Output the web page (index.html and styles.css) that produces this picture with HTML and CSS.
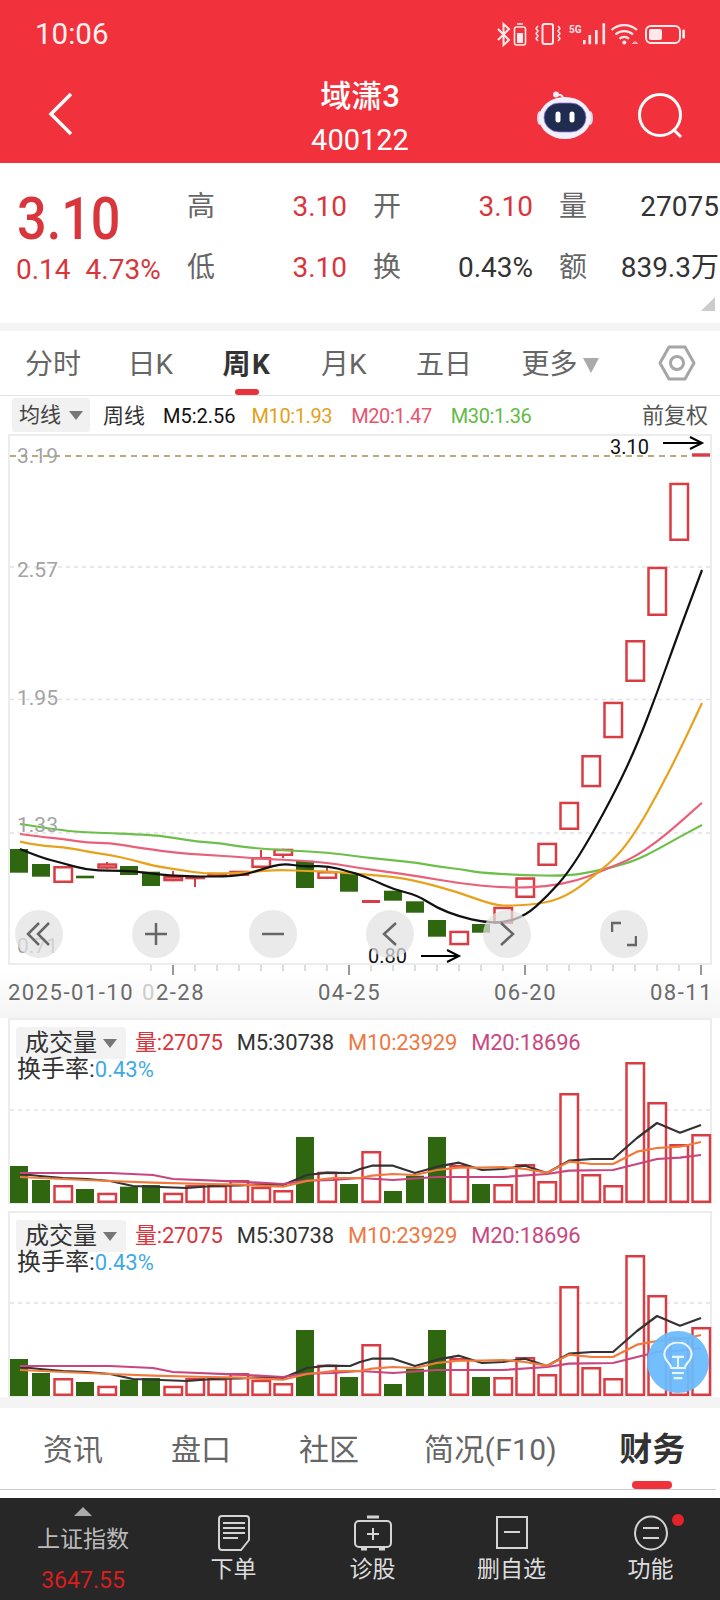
FILE: index.html
```html
<!DOCTYPE html>
<html lang="zh-CN">
<head>
    <meta charset="UTF-8">
    <meta name="viewport" content="width=device-width, initial-scale=1.0">
    <title>域潇3 400122</title>
    <link rel="stylesheet" href="styles.css">
</head>
<body>
    <header class="app-header">
        <div class="status-bar">
            <span class="status-time">10:06</span>
            <svg class="status-icons" width="195" height="30" viewBox="0 0 195 30" fill="none" stroke="#ffe9ea">
                <path d="M3 9 14 20 8.5 25V4L14 9 3 20" stroke-width="2"/>
                <path d="M22 4h6" stroke-width="1.6"/>
                <rect x="19.5" y="7" width="11" height="18" rx="2" stroke-width="1.6"/>
                <rect x="22" y="13" width="6" height="10" fill="#ffe9ea" stroke="none"/>
                <rect x="47.5" y="4" width="10.5" height="20" rx="2" stroke-width="2"/>
                <path d="M43 6l-2 2.5 2 2.5-2 2.5 2 2.5-2 2.5 2 2.5M63 6l2 2.5-2 2.5 2 2.5-2 2.5 2 2.5-2 2.5" stroke-width="1.5"/>
                <text class="status-5g" x="74" y="12.5">5G</text>
                <path d="M89.3 24.3V20M94.8 24.3V15M101.3 24.3V10M108.8 24.3V3.3" stroke-width="2.6"/>
                <path d="M116.5 10a19 19 0 0 1 25.5 0M120.5 14.5a13 13 0 0 1 17.5 0M124.5 18.7a7 7 0 0 1 9.5 0" stroke-width="2.2"/>
                <circle cx="129.3" cy="22.5" r="2" fill="#ffe9ea" stroke="none"/>
                <path d="M137 24l2.5-3v3zM140.5 21l2.5 3h-2.5z" fill="#ffe9ea" stroke="none"/>
                <rect x="151" y="6" width="34" height="17" rx="5" stroke-width="2"/>
                <rect x="154" y="9" width="13" height="11" rx="2" fill="#ffe9ea" stroke="none"/>
                <rect x="187.3" y="9.5" width="2.7" height="9" rx="1.3" fill="#ffe9ea" stroke="none"/>
            </svg>
        </div>
        <nav class="title-bar">
            <svg class="back-icon" width="26" height="44" viewBox="0 0 26 44" fill="none" stroke="#fff" stroke-width="3.5">
                <path d="M23 2 3 22l20 20"/>
            </svg>
            <div class="title-text">
                <div class="stock-name">域潇3</div>
                <div class="stock-code">400122</div>
            </div>
            <div class="title-actions">
                <svg width="60" height="52" viewBox="0 0 60 52">
                    <path d="M22 4c4-1 6 1 7 5" fill="none" stroke="#e6e6f5" stroke-width="2"/>
                    <circle cx="21" cy="3.5" r="3" fill="#f0eef8"/>
                    <ellipse cx="5" cy="27" rx="3" ry="7" fill="#d9d6ee"/>
                    <ellipse cx="55" cy="27" rx="3" ry="7" fill="#d9d6ee"/>
                    <ellipse cx="30" cy="27" rx="26" ry="21" fill="#f2f0fa"/>
                    <rect x="9" y="12" width="42" height="29" rx="15" fill="#1f2b4f" stroke="#8d7be0" stroke-width="0.8"/>
                    <rect x="20.5" y="20.5" width="5" height="11" rx="2.5" fill="#fff"/>
                    <rect x="34.5" y="20.5" width="5" height="11" rx="2.5" fill="#fff"/>
                </svg>
                <svg width="50" height="50" viewBox="0 0 50 50" fill="none" stroke="#fff" stroke-width="3">
                    <circle cx="24" cy="24" r="20.5"/>
                    <path d="M37 38l8 8"/>
                </svg>
            </div>
        </nav>
    </header>

    <section class="quote">
        <div class="quote-price">
            <div class="price-now">3.10</div>
            <div class="price-change"><span>0.14</span><span>4.73%</span></div>
        </div>
        <div class="quote-grid">
            <div class="quote-cell"><span class="cell-label">高</span><span class="up">3.10</span></div>
            <div class="quote-cell"><span class="cell-label">开</span><span class="up">3.10</span></div>
            <div class="quote-cell"><span class="cell-label">量</span><span>27075</span></div>
            <div class="quote-cell"><span class="cell-label">低</span><span class="up">3.10</span></div>
            <div class="quote-cell"><span class="cell-label">换</span><span>0.43%</span></div>
            <div class="quote-cell"><span class="cell-label">额</span><span>839.3万</span></div>
        </div>
        <span class="quote-corner"></span>
    </section>

    <div class="band"></div>

    <div class="period-tabs">
        <span class="period period-first">分时</span>
        <span class="period">日K</span>
        <span class="period active">周K</span>
        <span class="period">月K</span>
        <span class="period">五日</span>
        <span class="period period-more">更多<i class="caret caret-large"></i></span>
        <svg class="period-settings" width="38" height="38" viewBox="0 0 38 38" fill="none" stroke="#a6a6a6" stroke-width="3">
            <path d="M11 3h16l9 16-9 16H11L2 19z" stroke-linejoin="round"/>
            <circle cx="19" cy="19" r="6.5"/>
        </svg>
    </div>

    <div class="ma-legend">
        <span class="select-chip">均线<i class="caret"></i></span>
        <span class="ma-item ma-period">周线</span>
        <span class="ma-item ma-5">M5:2.56</span>
        <span class="ma-item ma-10">M10:1.93</span>
        <span class="ma-item ma-20">M20:1.47</span>
        <span class="ma-item ma-30">M30:1.36</span>
        <span class="ma-adjust">前复权</span>
    </div>

    <section class="kline">
        <svg id="kline-chart" class="chart" width="720" height="584" viewBox="0 434 720 584">
            <path class="frame" d="M9 964V435H711V964Z"/>
            <path class="grid-line" d="M10 567H710M10 699.5H710M10 833H710"/>
            <path class="last-line" d="M10 456H692"/>
            <g id="kline-ticks"></g>
            <g id="kline-candles"></g>
            <g id="kline-lines"></g>
            <text class="axis-price" x="17" y="463">3.19</text>
            <text class="axis-price" x="17" y="577">2.57</text>
            <text class="axis-price" x="17" y="705">1.95</text>
            <text class="axis-price" x="17" y="832">1.33</text>
            <text class="axis-price" x="17" y="953">0.71</text>
            <text class="mark-price" x="610" y="454">3.10</text>
            <path class="mark-arrow" d="M663 443H701M690 437l12 6-12 6"/>
            <text class="mark-price" x="368" y="963">0.80</text>
            <path class="mark-arrow" d="M421 956H458M447 950l12 6-12 6"/>
            <text class="axis-date" x="8" y="1000">2025-01-10</text>
            <text class="axis-date" x="142" y="1000"><tspan class="axis-faded">0</tspan>2-28</text>
            <text class="axis-date" x="318" y="1000">04-25</text>
            <text class="axis-date" x="494" y="1000">06-20</text>
            <text class="axis-date" x="650" y="1000">08-11</text>
        </svg>
        <div class="chart-tools">
            <span class="tool"><svg width="26" height="26" viewBox="0 0 26 26"><path d="M13 2 2 13l11 11M23 2 12 13l11 11"/></svg></span>
            <span class="tool"><svg width="26" height="26" viewBox="0 0 26 26"><path d="M13 2v22M2 13h22"/></svg></span>
            <span class="tool"><svg width="26" height="26" viewBox="0 0 26 26"><path d="M2 13h22"/></svg></span>
            <span class="tool"><svg width="26" height="26" viewBox="0 0 26 26"><path d="M19 2 7 13l12 11"/></svg></span>
            <span class="tool"><svg width="26" height="26" viewBox="0 0 26 26"><path d="M7 2l12 11L7 24"/></svg></span>
            <span class="tool"><svg width="26" height="26" viewBox="0 0 26 26"><path d="M1 11V2h9M25 15v9h-9"/></svg></span>
        </div>
    </section>

    <section class="volume volume-first">
        <svg class="chart volume-chart" width="720" height="186" viewBox="0 1018 720 186"></svg>
        <div class="volume-legend">
            <div class="volume-row">
                <span class="select-chip select-chip-volume">成交量<i class="caret"></i></span>
                <span class="up">量:27075</span>
                <span class="vol-5">M5:30738</span>
                <span class="vol-10">M10:23929</span>
                <span class="vol-20">M20:18696</span>
            </div>
            <div class="turnover">换手率:<span>0.43%</span></div>
        </div>
    </section>

    <section class="volume">
        <svg class="chart volume-chart" width="720" height="186" viewBox="0 1018 720 186"></svg>
        <div class="volume-legend">
            <div class="volume-row">
                <span class="select-chip select-chip-volume">成交量<i class="caret"></i></span>
                <span class="up">量:27075</span>
                <span class="vol-5">M5:30738</span>
                <span class="vol-10">M10:23929</span>
                <span class="vol-20">M20:18696</span>
            </div>
            <div class="turnover">换手率:<span>0.43%</span></div>
        </div>
        <div class="hint-bubble">
            <svg width="34" height="40" viewBox="0 0 40 46" fill="none" stroke="#e8f5ff" stroke-width="2.5">
                <path d="M12 30c0-5-8-8-8-16a16 14 0 0 1 32 0c0 8-8 11-8 16z"/>
                <path d="M13 17h14M20 17v13M13 36h14M15 42h10"/>
            </svg>
        </div>
    </section>

    <div class="band band-low"></div>

    <div class="info-tabs">
        <span class="info-tab">资讯</span>
        <span class="info-tab">盘口</span>
        <span class="info-tab">社区</span>
        <span class="info-tab info-tab-wide">简况(F10)</span>
        <span class="info-tab active">财务</span>
    </div>

    <footer class="bottom-nav">
        <div class="nav-item nav-index">
            <i class="index-arrow"></i>
            <span class="index-name">上证指数</span>
            <span class="index-value">3647.55</span>
        </div>
        <div class="nav-item">
            <svg width="34" height="36" viewBox="0 0 34 36" fill="none" stroke="#d4d4d4" stroke-width="2">
                <path d="M5 1h24a3 3 0 0 1 3 3v21l-8 10H5a3 3 0 0 1-3-3V4a3 3 0 0 1 3-3z"/>
                <path d="M6 8h22M6 13h22M6 18h22M6 23h15"/>
            </svg>
            <span class="nav-label">下单</span>
        </div>
        <div class="nav-item">
            <svg width="40" height="36" viewBox="0 0 40 36" fill="none" stroke="#d4d4d4" stroke-width="2">
                <rect x="2" y="6" width="36" height="26" rx="4"/>
                <path d="M14 2h12" stroke-width="3"/>
                <path d="M8 34h6M26 34h6" stroke-width="3"/>
                <path d="M20 13v12M14 19h12"/>
            </svg>
            <span class="nav-label">诊股</span>
        </div>
        <div class="nav-item">
            <svg width="34" height="36" viewBox="0 0 34 36" fill="none" stroke="#d4d4d4" stroke-width="2">
                <rect x="2" y="2" width="30" height="31"/>
                <path d="M9 17h16"/>
            </svg>
            <span class="nav-label">删自选</span>
        </div>
        <div class="nav-item">
            <svg width="36" height="36" viewBox="0 0 36 36" fill="none" stroke="#d4d4d4" stroke-width="2">
                <ellipse cx="18" cy="18" rx="16" ry="16.5"/>
                <path d="M10 13h16M10 23h16"/>
            </svg>
            <span class="nav-label">功能</span>
            <i class="nav-dot"></i>
        </div>
    </footer>

    <script src="chart.js"></script>
</body>
</html>
```

FILE: styles.css
```css
/* General Reset */
* {
    margin: 0;
    padding: 0;
    box-sizing: border-box;
}

body {
    width: 720px;
    height: 1600px;
    overflow: hidden;
    background-color: #fff;
    font-family: Roboto, "Noto Sans CJK SC", sans-serif;
    color: #333;
}

i {
    font-style: normal;
}

.up {
    color: #d8363c;
}

/* Red header */
.app-header {
    height: 163px;
    background-color: #f1323c;
    color: #fff;
}

.status-bar {
    height: 68px;
    padding: 19px 30px 0 35px;
    display: flex;
    justify-content: space-between;
    align-items: flex-start;
}

.status-time {
    font-size: 29.5px;
    line-height: 30px;
    color: #fff1f1;
}

.status-icons {
    margin-top: 1px;
}

.status-5g {
    font-size: 10px;
    font-weight: 700;
    fill: #ffe9ea;
    stroke: none;
}

.title-bar {
    height: 95px;
    display: grid;
    grid-template-columns: 1fr auto 1fr;
    align-items: start;
}

.back-icon {
    margin: 24px 0 0 48px;
}

.title-text {
    text-align: center;
}

.stock-name {
    font-size: 31px;
    line-height: 40px;
    margin-top: 9px;
    font-weight: 500;
}

.stock-code {
    font-size: 29px;
    line-height: 40px;
    margin-top: 3px;
}

.title-actions {
    display: flex;
    justify-content: flex-end;
    align-items: flex-start;
    gap: 41px;
    padding: 23px 34px 0 0;
}

/* Quote block */
.quote {
    position: relative;
    height: 160px;
    display: flex;
    padding-left: 16px;
}

.quote-price {
    width: 171px;
    padding-top: 26px;
    color: #d8363c;
}

.price-now {
    font-size: 60px;
    line-height: 60px;
    font-weight: 500;
    margin-left: 1px;
    transform: scaleX(0.87);
    transform-origin: left;
}

.price-change {
    display: flex;
    gap: 15px;
    font-size: 28px;
    line-height: 40px;
    margin-top: 1px;
    white-space: nowrap;
}

.quote-grid {
    width: 531px;
    padding-top: 24px;
    display: grid;
    grid-template-columns: repeat(3, 160px);
    grid-auto-rows: 40px;
    column-gap: 26px;
    row-gap: 21px;
    font-size: 28px;
    line-height: 40px;
}

.quote-cell {
    display: flex;
    justify-content: space-between;
    white-space: nowrap;
}

.cell-label {
    color: #666;
}

.quote-corner {
    position: absolute;
    right: 5px;
    top: 134px;
    border-style: solid;
    border-width: 0 0 14px 14px;
    border-color: transparent transparent #ccc transparent;
}

.band {
    height: 8px;
    background-color: #f4f4f4;
}

.band-low {
    height: 11px;
}

/* Period tabs */
.period-tabs {
    height: 65px;
    padding: 0 24px 0 25px;
    display: flex;
    align-items: center;
    gap: 49.5px;
    border-bottom: 1px solid #e4e4e4;
}

.period {
    position: relative;
    font-size: 28px;
    line-height: 60px;
    padding-top: 4px;
    color: #666;
}

.period-first {
    margin-right: -3px;
}

.period.active {
    font-weight: 700;
    letter-spacing: 1.5px;
    color: #333;
}

.period.active::after {
    content: "";
    position: absolute;
    left: 12px;
    right: 12px;
    bottom: 0;
    height: 6px;
    border-radius: 3px;
    background-color: #e8333b;
}

.period-more {
    display: flex;
    align-items: center;
    gap: 5px;
}

.period-settings {
    margin-left: auto;
}

.caret {
    display: inline-block;
    border-style: solid;
    border-width: 9px 7px 0 7px;
    border-color: #777 transparent transparent transparent;
}

.caret-large {
    border-width: 15px 8px 0 8px;
    border-color: #aaa transparent transparent transparent;
}

/* Moving average legend */
.ma-legend {
    height: 38px;
    padding: 2px 12px 0 12px;
    display: flex;
    align-items: flex-start;
    font-size: 20px;
    line-height: 36px;
    white-space: nowrap;
}

.select-chip {
    display: flex;
    align-items: center;
    gap: 8px;
    width: 78px;
    height: 34px;
    padding-left: 7px;
    border-radius: 3px;
    background-color: #f1f1f1;
    font-size: 21px;
    color: #444;
}

.ma-item {
    margin-left: 17px;
}

.ma-period {
    margin-left: 13px;
    font-size: 21px;
}

.ma-5 {
    margin-left: 18px;
    color: #111;
}

.ma-10 {
    margin-left: 16px;
    color: #e2a11e;
    letter-spacing: -0.4px;
}

.ma-20 {
    color: #e6566f;
    letter-spacing: -0.4px;
    margin-left: 19px;
}

.ma-30 {
    color: #62ba45;
    letter-spacing: -0.4px;
    margin-left: 19px;
}

.ma-adjust {
    margin-left: auto;
    font-size: 22px;
    color: #555;
}

/* K-line chart */
.kline {
    position: relative;
    height: 584px;
    background: linear-gradient(#fff 92%, #f4f4f4);
}

.chart {
    display: block;
}

.frame {
    fill: #fff;
    stroke: #ececec;
    stroke-width: 2;
}

.grid-line {
    fill: none;
    stroke: #e2e2e2;
    stroke-width: 1.5;
    stroke-dasharray: 4 4;
}

.last-line {
    fill: none;
    stroke: #bca97e;
    stroke-width: 2;
    stroke-dasharray: 6 5;
}

.axis-price {
    font-size: 21px;
    fill: #a3a3a3;
}

.mark-price {
    font-size: 20px;
    fill: #111;
}

.mark-arrow {
    fill: none;
    stroke: #000;
    stroke-width: 2;
}

.axis-date {
    font-size: 22px;
    letter-spacing: 1.5px;
    fill: #6a6a6a;
}

.axis-faded {
    fill: #ccc;
}

.chart-tools {
    position: absolute;
    left: 15px;
    top: 476px;
    display: flex;
    gap: 69px;
}

.tool {
    width: 48px;
    height: 48px;
    display: flex;
    align-items: center;
    justify-content: center;
    border-radius: 50%;
    background-color: rgba(226, 226, 226, 0.72);
}

.tool svg {
    fill: none;
    stroke: #666;
    stroke-width: 2.5;
}

/* Volume panels */
.volume {
    position: relative;
    background-color: #fff;
}

.volume-first {
    padding-bottom: 7px;
}

.volume-legend {
    position: absolute;
    left: 16px;
    top: 8px;
}

.volume-row {
    display: flex;
    align-items: center;
    gap: 14px;
    font-size: 22px;
    line-height: 34px;
    letter-spacing: -0.2px;
    white-space: nowrap;
}

.select-chip-volume {
    width: 110px;
    height: 32px;
    padding-left: 9px;
    gap: 6px;
    margin-right: -5px;
    font-size: 24px;
    letter-spacing: 0;
    background-color: #f2f2f2;
    color: #333;
}

.vol-5 {
    color: #333;
}

.vol-10 {
    color: #ec7a45;
}

.vol-20 {
    color: #c9487f;
}

.turnover {
    font-size: 24px;
    line-height: 30px;
    margin-top: -6px;
    margin-left: 1px;
    color: #333;
}

.turnover span {
    font-size: 22px;
    color: #3fa9e6;
}

.hint-bubble {
    position: absolute;
    left: 647px;
    top: 120px;
    width: 62px;
    height: 62px;
    display: flex;
    align-items: center;
    justify-content: center;
    border-radius: 50%;
    background-color: rgba(106, 186, 252, 0.94);
}

/* Info tabs */
.info-tabs {
    height: 82px;
    padding-left: 43px;
    display: flex;
    border-bottom: 1px solid #ccc;
    margin-right: 4px;
}

.info-tab {
    position: relative;
    font-size: 30px;
    line-height: 78px;
    padding-top: 3px;
    color: #666;
}

.info-tab + .info-tab {
    margin-left: 68px;
}

.info-tab + .info-tab-wide {
    margin-left: 65px;
    letter-spacing: 0.3px;
}

.info-tab + .info-tab.active {
    margin-left: 62px;
    font-size: 33px;
    font-weight: 700;
    color: #333;
}

.info-tab.active::after {
    content: "";
    position: absolute;
    left: 13px;
    right: 13px;
    bottom: 0;
    height: 8px;
    border-radius: 4px;
    background-color: #f0333b;
}

/* Bottom navigation */
.bottom-nav {
    height: 102px;
    margin-top: 8px;
    padding-left: 2px;
    display: grid;
    grid-template-columns: 162px repeat(4, 139px);
    background-color: #272727;
}

.nav-item {
    position: relative;
    padding-top: 17px;
    display: flex;
    flex-direction: column;
    align-items: center;
    gap: 4px;
}

.nav-label {
    font-size: 23px;
    line-height: 30px;
    color: #ddd;
}

.nav-index {
    padding-top: 9px;
    gap: 0;
}

.index-arrow {
    border-style: solid;
    border-width: 0 9px 9px 9px;
    border-color: transparent transparent #aaa transparent;
}

.index-name {
    margin-top: 9px;
    font-size: 23px;
    line-height: 30px;
    color: #bbb;
}

.index-value {
    margin-top: 11px;
    font-size: 23px;
    line-height: 30px;
    color: #d81e1e;
}

.nav-dot {
    position: absolute;
    left: 91px;
    top: 16px;
    width: 12px;
    height: 12px;
    border-radius: 50%;
    background-color: #e5232b;
}
```

FILE: chart.js
```js
const SVG_NS = 'http://www.w3.org/2000/svg';
const RED = '#d93c42';
const GREEN = '#2f6610';
const SLOT = 22;

const el = (parent, name, attrs) => {
    const node = document.createElementNS(SVG_NS, name);
    Object.entries(attrs).forEach(([k, v]) => node.setAttribute(k, v));
    parent.appendChild(node);
    return node;
};

const slotLeft = (i) => 10 + SLOT * i;

const drawBar = (parent, kind, i, top, bottom) => {
    if (kind === 'r') {
        el(parent, 'rect', { x: slotLeft(i) + 0.5, y: top + 1.25, width: 17.5, height: bottom - top - 2.5, fill: '#fff', stroke: RED, 'stroke-width': 2.5 });
    } else {
        el(parent, 'rect', { x: slotLeft(i), y: top, width: 18, height: bottom - top, fill: kind === 'g' ? GREEN : RED });
    }
};

const drawLine = (parent, color, points, width) => {
    el(parent, 'polyline', {
        points: points.map((p) => p.join(',')).join(' '),
        fill: 'none',
        stroke: color,
        'stroke-width': width,
        'stroke-linejoin': 'round'
    });
};

// Rounds the corners of a line by curving through the midpoints of its segments
const drawCurve = (parent, color, points, width) => {
    let d = `M${points[0].join(' ')}`;
    for (let i = 1; i < points.length - 1; i++) {
        const [x, y] = points[i];
        const [nx, ny] = points[i + 1];
        d += `Q${x} ${y} ${(x + nx) / 2} ${(y + ny) / 2}`;
    }
    d += `L${points[points.length - 1].join(' ')}`;
    el(parent, 'path', { d, fill: 'none', stroke: color, 'stroke-width': width });
};

// Weekly candles: kind, body top, body bottom, wick top, wick bottom
const candles = [
    ['g', 849, 872.7], ['g', 864, 876.7], ['r', 866, 883], ['g', 875.7, 878.3],
    ['r', 863.3, 868.7, 862], ['g', 866, 875], ['g', 871.7, 886], ['r', 876, 881.3, 871],
    ['r', 876, 879.3, 876, 887], ['r', 872.7, 877], ['r', 870.7, 876], ['r', 857, 868, 850],
    ['r', 848.7, 856, 848.7, 858], ['g', 860.7, 888], ['r', 871, 879, 868], ['g', 873, 891.7],
    ['f', 900, 903], ['g', 890.7, 900.7], ['g', 901.3, 912.7], ['g', 920, 936.7],
    ['r', 930.7, 945.3], ['g', 924, 932.7], ['r', 906.7, 924], ['r', 877.3, 898],
    ['r', 842.7, 866], ['r', 801.7, 830], ['r', 755, 787.3], ['r', 701.7, 738.3],
    ['r', 640, 682], ['r', 566.7, 616], ['r', 482.7, 541], ['f', 453.3, 456.7]
];

const priceLines = {
    '#111': [[20, 849], [40, 857.3], [63, 863.3], [87, 870], [110, 870.7], [133, 871], [160, 874.7], [180, 876], [207, 876.7], [240, 876], [263, 869], [283, 863.3], [303, 866.7], [327, 865.7], [350, 871.7], [360, 875], [373, 880], [395, 890], [417, 895], [437, 908], [460, 916.7], [483, 922], [503, 922.7], [525, 916], [547, 896.7], [568, 873], [590, 838], [617, 788], [637, 745], [657, 693], [677, 637], [702, 570]],
    '#e6a21c': [[20, 841.7], [40, 846], [63, 846.7], [87, 851.7], [110, 855], [133, 860], [153, 865.7], [180, 870], [207, 874], [240, 873], [263, 870.7], [283, 870], [307, 871], [333, 871.7], [359, 874], [393, 876.7], [417, 881], [457, 891.7], [493, 905], [513, 906], [547, 903], [570, 894], [593, 876.7], [617, 856.7], [637, 830], [658, 793], [680, 750], [702, 703]],
    '#e8607a': [[20, 834], [40, 836.7], [63, 839], [87, 842.7], [110, 843], [133, 846.7], [173, 852.7], [207, 855], [240, 857], [263, 859], [290, 860], [330, 863], [359, 868], [387, 871.7], [417, 876], [457, 883], [503, 888], [547, 886.7], [577, 880.7], [603, 870.7], [633, 858], [657, 841.7], [677, 825], [702, 802.7]],
    '#6cc04a': [[20, 824], [63, 830.7], [87, 832.3], [153, 835], [173, 837.7], [197, 841.7], [220, 843], [243, 847.3], [290, 850.7], [327, 852.3], [359, 856.7], [390, 860], [417, 862.7], [440, 867], [460, 869], [480, 872.7], [520, 875], [567, 876], [593, 871.7], [633, 862], [660, 848], [680, 836.7], [702, 825]]
};

// Volume bars: kind and top of each bar, all standing on the same baseline
const VOLUME_BASE = 1203;
const volumes = [
    ['g', 1166], ['g', 1180], ['r', 1185], ['g', 1189], ['r', 1192.7], ['g', 1186.7], ['g', 1185], ['r', 1192.7],
    ['r', 1185], ['r', 1185], ['r', 1180], ['r', 1186.7], ['r', 1190], ['g', 1137], ['r', 1171.7], ['g', 1184],
    ['r', 1151], ['g', 1191], ['g', 1175.7], ['g', 1137], ['r', 1165], ['g', 1184], ['r', 1184], ['r', 1164],
    ['r', 1181], ['r', 1093], ['r', 1174], ['r', 1185], ['r', 1062], ['r', 1102], ['r', 1144], ['r', 1134]
];

const volumeLines = {
    '#333': [[20, 1174], [40, 1176], [63, 1178], [87, 1179], [110, 1181], [133, 1186], [160, 1187], [187, 1188], [213, 1186], [240, 1185.3], [263, 1184.3], [283, 1185], [307, 1175], [327, 1172.7], [350, 1173], [360, 1169], [372, 1165.7], [393, 1165.7], [415, 1173], [437, 1166.7], [459, 1162.7], [482, 1170], [503, 1169], [525, 1165.7], [547, 1173], [569, 1160.7], [592, 1159], [613, 1159], [637, 1138], [657, 1123], [680, 1132.7], [701, 1125]],
    '#c8457e': [[20, 1173], [110, 1173], [153, 1175], [173, 1179], [240, 1181.7], [283, 1184], [307, 1180.7], [333, 1180], [360, 1178], [393, 1180], [437, 1177], [503, 1177], [547, 1174], [569, 1170.7], [613, 1170], [637, 1164], [657, 1159], [680, 1157.7], [701, 1155]],
    '#f07a3c': [[20, 1177], [63, 1179], [110, 1181], [153, 1182.7], [207, 1184], [240, 1184.7], [283, 1186.7], [307, 1181], [333, 1178], [360, 1178], [372, 1175.7], [393, 1174], [415, 1175], [437, 1170], [459, 1167.7], [482, 1167.7], [503, 1167], [525, 1169], [547, 1172.7], [569, 1161.7], [592, 1164], [613, 1164], [637, 1151.7], [657, 1148], [680, 1146.7], [701, 1142]]
};

// K-line panel
const chart = document.getElementById('kline-chart');
const ticks = chart.querySelector('#kline-ticks');
for (let i = 6; i < 32; i++) {
    const x = slotLeft(i) + 9;
    const major = (i - 7) % 8 === 0;
    el(ticks, 'line', { x1: x, x2: x, y1: 965, y2: major ? 975 : 971, stroke: major ? '#777' : '#bbb', 'stroke-width': major ? 1.5 : 1 });
}

const candleGroup = chart.querySelector('#kline-candles');
candles.forEach(([kind, top, bottom, wickTop, wickBottom], i) => {
    if (wickTop !== undefined) {
        const x = slotLeft(i) + 9;
        el(candleGroup, 'line', { x1: x, x2: x, y1: wickTop, y2: wickBottom === undefined ? bottom : wickBottom, stroke: RED, 'stroke-width': 2 });
    }
    drawBar(candleGroup, kind, i, top, bottom);
});

const lineGroup = chart.querySelector('#kline-lines');
Object.entries(priceLines).reverse().forEach(([color, points]) => drawCurve(lineGroup, color, points, 2.2));

// Volume panels share one data set
document.querySelectorAll('.volume-chart').forEach((svg) => {
    el(svg, 'path', { class: 'frame', d: 'M9 1204V1019H711V1204Z' });
    el(svg, 'path', { class: 'grid-line', d: 'M10 1110H710' });
    volumes.forEach(([kind, top], i) => drawBar(svg, kind, i, top, VOLUME_BASE));
    Object.entries(volumeLines).forEach(([color, points]) => drawLine(svg, color, points, 2.2));
});
```
